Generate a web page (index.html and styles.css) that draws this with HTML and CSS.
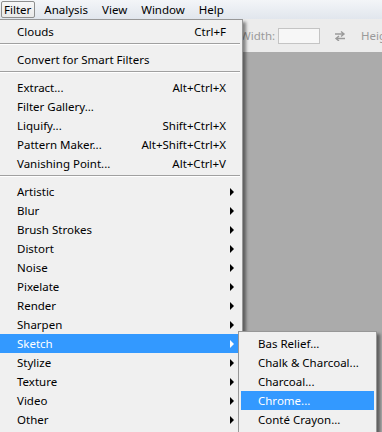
FILE: index.html
```html
<!DOCTYPE html>
<html lang="en">
<head>
    <meta charset="UTF-8">
    <title>Filter menu</title>
    <link rel="stylesheet" href="styles.css">
</head>
<body>
    <!-- menu bar -->
    <div class="menubar">
        <span class="menubar-item open">Filter</span>
        <span class="menubar-item">Analysis</span>
        <span class="menubar-item">View</span>
        <span class="menubar-item">Window</span>
        <span class="menubar-item">Help</span>
    </div>

    <!-- options bar behind the menu -->
    <div class="options-bar">
        <span class="opt-label">Width:</span>
        <span class="opt-input"></span>
        <svg class="swap-icon" width="12" height="10" viewBox="0 0 12 10">
            <path d="M1 3h9M7 0.5l3 2.5-3 2.5" fill="none" stroke="#9a9a9a" stroke-width="1.4"/>
            <path d="M11 7.5H2M5 5l-3 2.5 3 2.5" fill="none" stroke="#9a9a9a" stroke-width="1.4"/>
        </svg>
        <span class="opt-label">Height:</span>
    </div>

    <div class="workspace"></div>

    <!-- Filter dropdown -->
    <div class="dropdown main-menu">
        <div class="item"><span>Clouds</span><span class="shortcut">Ctrl+F</span></div>
        <div class="sep"></div>
        <div class="item"><span>Convert for Smart Filters</span></div>
        <div class="sep"></div>
        <div class="item"><span>Extract...</span><span class="shortcut">Alt+Ctrl+X</span></div>
        <div class="item"><span>Filter Gallery...</span></div>
        <div class="item"><span>Liquify...</span><span class="shortcut">Shift+Ctrl+X</span></div>
        <div class="item"><span>Pattern Maker...</span><span class="shortcut">Alt+Shift+Ctrl+X</span></div>
        <div class="item"><span>Vanishing Point...</span><span class="shortcut">Alt+Ctrl+V</span></div>
        <div class="sep"></div>
        <div class="item sub"><span>Artistic</span><i class="arrow"></i></div>
        <div class="item sub"><span>Blur</span><i class="arrow"></i></div>
        <div class="item sub"><span>Brush Strokes</span><i class="arrow"></i></div>
        <div class="item sub"><span>Distort</span><i class="arrow"></i></div>
        <div class="item sub"><span>Noise</span><i class="arrow"></i></div>
        <div class="item sub"><span>Pixelate</span><i class="arrow"></i></div>
        <div class="item sub"><span>Render</span><i class="arrow"></i></div>
        <div class="item sub"><span>Sharpen</span><i class="arrow"></i></div>
        <div class="item sub active"><span>Sketch</span><i class="arrow"></i></div>
        <div class="item sub"><span>Stylize</span><i class="arrow"></i></div>
        <div class="item sub"><span>Texture</span><i class="arrow"></i></div>
        <div class="item sub"><span>Video</span><i class="arrow"></i></div>
        <div class="item sub"><span>Other</span><i class="arrow"></i></div>
    </div>

    <!-- Sketch submenu -->
    <div class="dropdown sub-menu">
        <div class="item"><span>Bas Relief...</span></div>
        <div class="item"><span>Chalk &amp; Charcoal...</span></div>
        <div class="item"><span>Charcoal...</span></div>
        <div class="item active"><span>Chrome...</span></div>
        <div class="item"><span>Conté Crayon...</span></div>
    </div>
</body>
</html>
```

FILE: styles.css
```css
* {
    margin: 0;
    padding: 0;
    box-sizing: border-box;
}

body {
    width: 382px;
    height: 432px;
    overflow: hidden;
    position: relative;
    font-family: "Noto Sans", "Open Sans", sans-serif;
    font-size: 11.5px;
    color: #000;
    display: flex;
    flex-direction: column;
    background-color: #ababab;
}

/* menu bar */
.menubar {
    height: 19px;
    display: flex;
    align-items: center;
    padding-left: 1px;
    background: linear-gradient(#f3f5f8, #e1e6ed);
}

.menubar-item {
    height: 17px;
    line-height: 15px;
    padding: 0 2px;
    margin-right: 8px;
    border: 1px solid transparent;
    border-radius: 2px;
}

.menubar-item.open {
    border-color: #8e8f8f;
    background: linear-gradient(#f7f7f7, #e9e9e9);
    padding: 0 3px 0 2px;
    margin-right: 6px;
}

/* options bar */
.options-bar {
    height: 33px;
    display: flex;
    align-items: center;
    padding-left: 240px;
    background-color: #ececec;
    color: #9a9a9a;
    white-space: nowrap;
}

.options-bar > * {
    flex-shrink: 0;
}

.opt-input {
    width: 42px;
    height: 16px;
    margin: 0 14px 0 3px;
    border: 1px solid #c4c4c4;
    background-color: #f7f7f7;
}

.swap-icon {
    margin-right: 15px;
}

.workspace {
    flex: 1;
    background-color: #ababab;
}

/* dropdown menus */
.dropdown {
    position: absolute;
    padding: 2px;
    background-color: #f0f0f0;
    border: 1px solid #979797;
    box-shadow: 3px 3px 3px rgba(0, 0, 0, 0.45);
}

.main-menu {
    top: 19px;
    left: -3px;
    width: 246px;
    height: 420px;
}

.sub-menu {
    top: 331px;
    left: 238px;
    width: 139px;
    height: 120px;
}

.item {
    height: 19px;
    display: flex;
    align-items: center;
    padding: 0 14px 0 17px;
    white-space: nowrap;
}

.item.sub {
    padding-right: 6px;
}

.item.active {
    background-color: #3399ff;
    color: #fff;
}

.shortcut {
    margin-left: auto;
}

.arrow {
    margin-left: auto;
    width: 0;
    height: 0;
    border-top: 4px solid transparent;
    border-bottom: 4px solid transparent;
    border-left: 4px solid #000;
}

.item.active .arrow {
    border-left-color: #fff;
}

.sep {
    height: 9px;
    padding-top: 2px;
}

.sep::before {
    content: "";
    display: block;
    border-top: 1px solid #a0a0a0;
    border-bottom: 1px solid #ffffff;
}
```
